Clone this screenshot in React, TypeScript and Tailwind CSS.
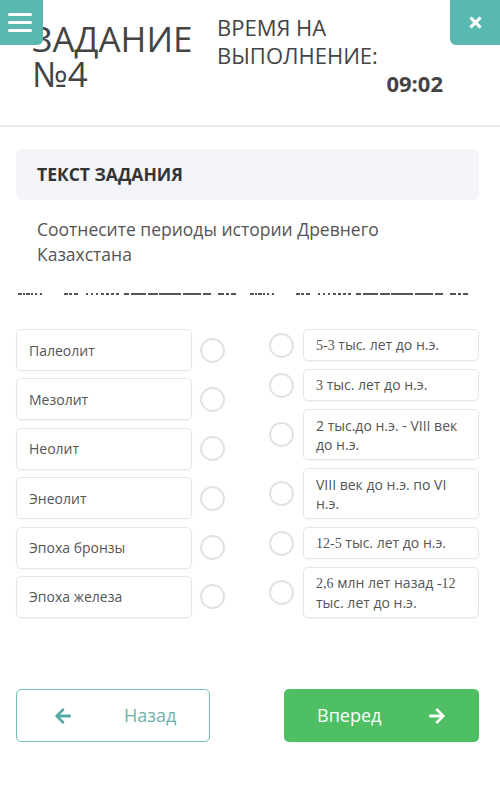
import { FaArrowLeft, FaArrowRight, FaTimes } from 'react-icons/fa';

const LEFT = ['Палеолит', 'Мезолит', 'Неолит', 'Энеолит', 'Эпоха бронзы', 'Эпоха железа'];

const serif = "font-['Liberation_Serif',serif]";

const RIGHT: { two: boolean; text: React.ReactNode }[] = [
  {
    two: false,
    text: (
      <>
        <span className={serif}>5-3</span> тыс. лет до н.э.
      </>
    ),
  },
  {
    two: false,
    text: (
      <>
        <span className={serif}>3</span> тыс. лет до н.э.
      </>
    ),
  },
  {
    two: true,
    text: (
      <>
        2 тыс.до н.э. - VIII век
        <br />
        до н.э.
      </>
    ),
  },
  {
    two: true,
    text: (
      <>
        VIII век до н.э. по VI
        <br />
        н.э.
      </>
    ),
  },
  {
    two: false,
    text: (
      <>
        <span className={serif}>12-5</span> тыс. лет до н.э.
      </>
    ),
  },
  {
    two: true,
    text: (
      <>
        <span className={serif}>2,6</span> млн лет назад <span className={serif}>-12</span>
        <br />
        тыс. лет до н.э.
      </>
    ),
  },
];

// dash segments under the task text, [x, width]
const DASHES: [number, number][] = [
  [0, 4], [5, 2], [8, 4], [13, 2], [17, 2], [22, 2], [46, 4], [51, 3], [56, 4], [68, 2], [73, 2],
  [78, 2], [83, 3], [88, 3], [93, 3], [98, 3], [106, 5], [113, 15], [130, 10], [141, 22],
  [165, 18], [185, 8], [200, 6], [208, 3], [213, 5],
];

function Circle() {
  return <div className="w-[25px] h-[25px] shrink-0 rounded-full border-2 border-[#e2e2e2]" />;
}

export default function App() {
  return (
    <div className="relative w-full h-[787px] bg-white overflow-hidden font-['Open_Sans',sans-serif] text-[#444]">
      {/* header */}
      <div className="relative h-[127px] border-b-2 border-[#ececec] flex">
        <div className="w-[185px] shrink-0 ml-[32px] pt-[21px] text-[35px] leading-[35px]">
          ЗАДАНИЕ
          <br />
          №4
        </div>
        <div className="w-[226px] pt-[13px] text-[22px] leading-[28px]">
          <div>ВРЕМЯ НА</div>
          <div>ВЫПОЛНЕНИЕ:</div>
          <div className="text-right font-bold">09:02</div>
        </div>

        <button className="absolute left-0 top-0 w-[43px] h-[45px] bg-[#59b9b0] rounded-br-md flex flex-col justify-center gap-[5px] pl-[8px]">
          <span className="block w-[24px] h-[3px] bg-white rounded-sm" />
          <span className="block w-[24px] h-[3px] bg-white rounded-sm" />
          <span className="block w-[24px] h-[3px] bg-white rounded-sm" />
        </button>
        <button className="absolute right-0 top-0 w-[50px] h-[45px] bg-[#59b9b0] rounded-bl-md flex items-center justify-center text-white">
          <FaTimes size={17} />
        </button>
      </div>

      <div className="pl-[16px] pr-[21px]">
        <div className="mt-[22px] h-[51px] rounded-md bg-[#f3f5f8] pl-[21px] flex items-center text-[17.5px] font-bold text-[#333]">
          ТЕКСТ ЗАДАНИЯ
        </div>

        <p className="mt-[17px] pl-[21px] text-[17.5px] leading-[25px] text-[#555]">
          Соотнесите периоды истории Древнего
          <br />
          Казахстана
        </p>

        <svg className="mt-[25px] block" width="463" height="4">
          {DASHES.map(([x, w], i) => (
            <g key={i} fill="#555">
              <rect x={x + 2} y={1} width={w} height={2} />
              <rect x={x + 234} y={1} width={w} height={2} />
            </g>
          ))}
        </svg>

        <div className="mt-[33px] flex justify-between items-start">
          <div className="flex flex-col gap-[7.4px]">
            {LEFT.map((t) => (
              <div key={t} className="flex items-center gap-[8px]">
                <div className="w-[176px] h-[42px] border border-[#e6e6e6] rounded-[5px] shadow-[0_1px_2px_rgba(0,0,0,0.04)] flex items-center pl-[12px] text-[14px] text-[#555]">
                  {t}
                </div>
                <Circle />
              </div>
            ))}
          </div>
          <div className="flex flex-col gap-[8px]">
            {RIGHT.map((r, i) => (
              <div key={i} className="flex items-center gap-[9px]">
                <Circle />
                <div
                  className={
                    (r.two ? 'h-[51px] ' : 'h-[32px] ') +
                    'w-[176px] flex items-center border border-[#e6e6e6] rounded-[5px] shadow-[0_1px_2px_rgba(0,0,0,0.04)] pl-[12px] pr-[6px] text-[14px] leading-[19px] text-[#555]'
                  }
                >
                  <div>{r.text}</div>
                </div>
              </div>
            ))}
          </div>
        </div>

        <div className="mt-[71px] flex justify-between">
          <button className="w-[194px] h-[53px] border-[1.5px] border-[#75beb9] rounded-[5px] flex items-center pl-[37px] text-[#6eb2ae]">
            <FaArrowLeft size={18} className="text-[#55aaa6]" />
            <span className="ml-[52px] text-[18px]">Назад</span>
          </button>
          <button className="w-[195px] h-[53px] bg-[#4ebf63] rounded-[5px] flex items-center justify-between px-[33px] text-white">
            <span className="text-[18px]">Вперед</span>
            <FaArrowRight size={18} />
          </button>
        </div>
      </div>
    </div>
  );
}
